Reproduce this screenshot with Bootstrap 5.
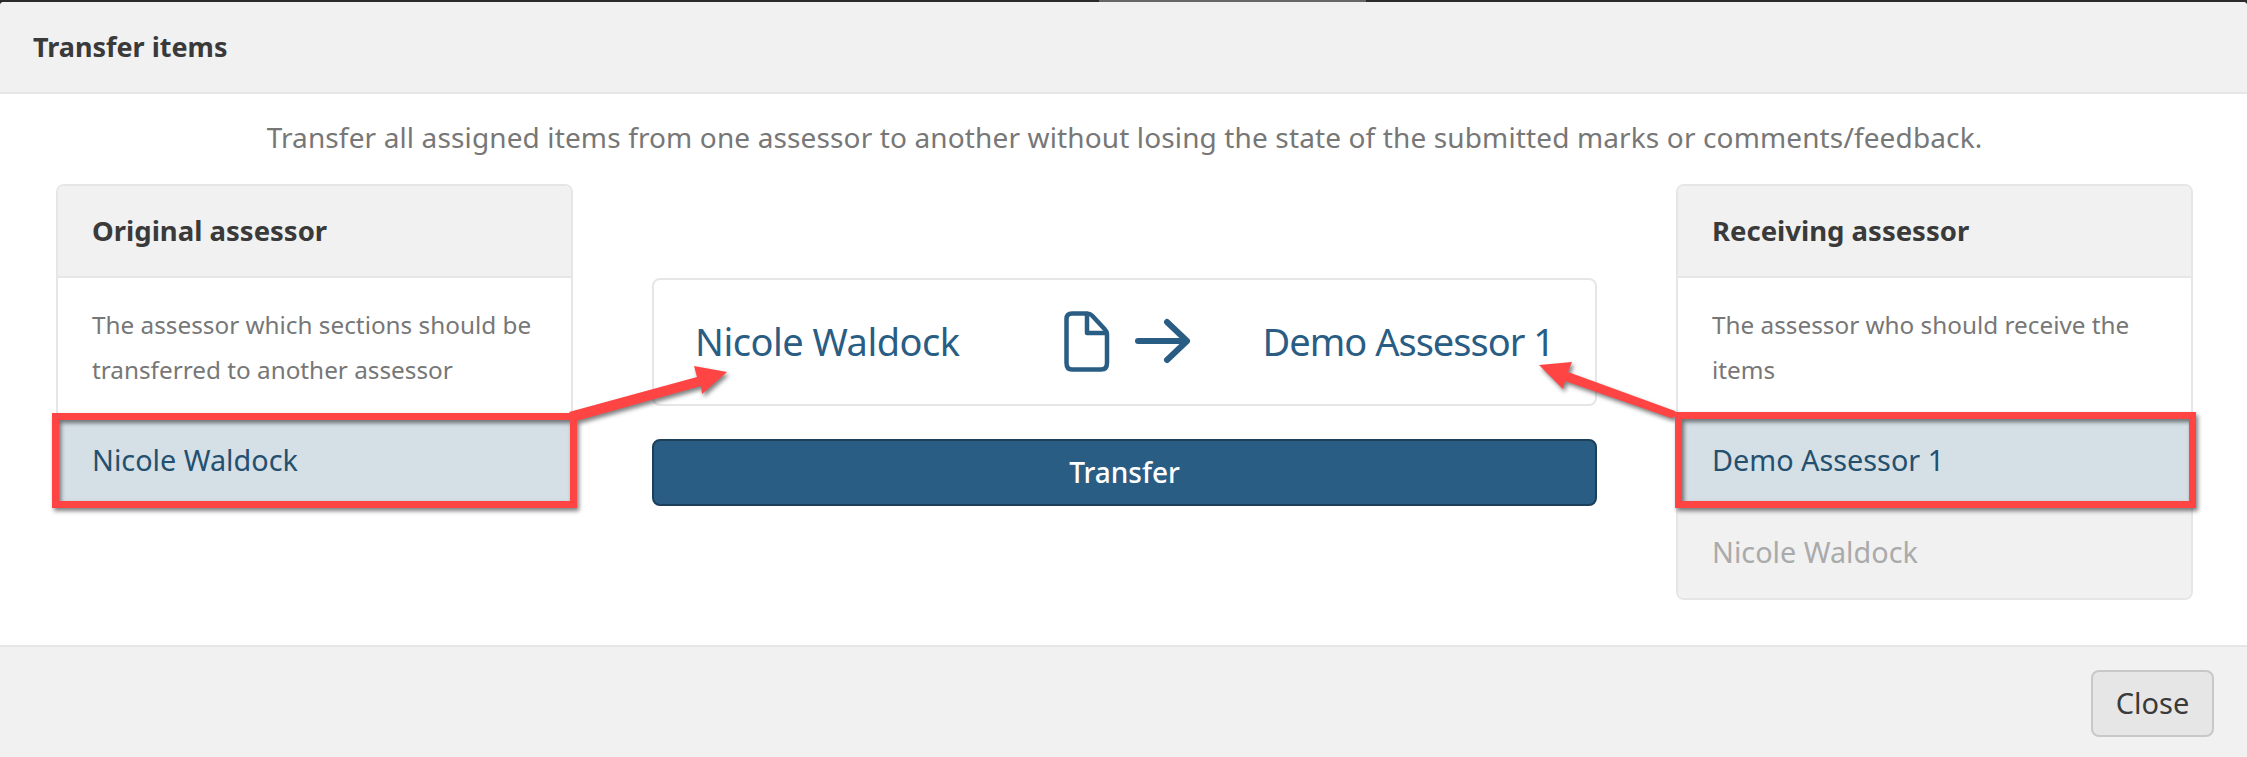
<!doctype html>
<html lang="en">
<head>
  <meta charset="utf-8">
  <title>Transfer items</title>
  <link href="https://cdn.jsdelivr.net/npm/bootstrap@5.3.0/dist/css/bootstrap.min.css" rel="stylesheet">
  <style>
    html, body { height: 757px; overflow: hidden; }
    body { background: linear-gradient(90deg, #2b2b2b 1099px, #666 1099px, #666 1366px, #2b2b2b 1366px); font-family: "Noto Sans", "Open Sans", sans-serif; color: #3a3a3a; }
    .dialog { position: relative; margin-top: 2px; height: 755px; background: #fff; border-radius: 4px 4px 0 0; overflow: hidden; display: flex; flex-direction: column; }
    .dialog-head { height: 92px; padding-left: 33px; background: #f1f1f1; border-bottom: 2px solid #e6e6e6; font-size: 27px; font-weight: 700; display: flex; align-items: center; }
    .dialog-main { flex: 1 1 auto; padding: 0 54px 0 56px; }
    .intro { margin: 0; padding-top: 23px; height: 90px; text-align: center; font-size: 28px; letter-spacing: .13px; color: #777; line-height: 40px; }
    .columns { display: flex; justify-content: space-between; align-items: flex-start; }
    .side { width: 517px; border: 2px solid #e6e6e6; border-radius: 8px; overflow: hidden; }
    .side-head { height: 92px; padding-left: 34px; background: #f1f1f1; border-bottom: 2px solid #e6e6e6; font-size: 27.500px; font-weight: 700; display: flex; align-items: center; }
    .side-text { margin: 0; padding: 24px 34px 0; height: 136px; font-size: 24.300px; line-height: 45px; color: #777; }
    .person { height: 92px; padding-left: 34px; font-size: 28.800px; display: flex; align-items: center; }
    .person-on { background: #d5dfe6; color: #24506f; }
    .person-off { background: #f1f1f1; color: #aaa; }
    .middle { width: 945px; padding-top: 94px; }
    .summary { height: 128px; padding: 0 41px 2px; border: 2px solid #e6e6e6; border-radius: 8px; color: #2a5d84; font-size: 38px; display: flex; align-items: center; }
    .from-name { letter-spacing: -.5px; }
    .to-name { letter-spacing: -1px; }
    .summary-icons { gap: 25px; margin-left: 103px; margin-right: auto; }
    .go-btn { width: 100%; height: 67px; margin-top: 33px; background: #2a5d84; border: 2px solid #1c3f5a; border-radius: 8px; color: #fff; font-size: 28px; font-weight: 500; padding: 0 0 2px; }
    .dialog-foot { height: 112px; padding: 23px 33px 0 0; background: #f1f1f1; border-top: 2px solid #e6e6e6; display: flex; justify-content: flex-end; align-items: flex-start; }
    .close-btn { width: 123px; height: 67px; padding: 0 0 2px; background: #e6e6e6; border: 2px solid #c8c8c8; border-radius: 8px; color: #3a3a3a; font-size: 29px; }
    .notes { position: absolute; left: 0; top: -2px; pointer-events: none; filter: drop-shadow(2px 3px 2px rgba(0,0,0,.5)); }
  </style>
</head>
<body>
  <div class="dialog">
    <div class="dialog-head">Transfer items</div>
    <div class="dialog-main">
      <p class="intro">Transfer all assigned items from one assessor to another without losing the state of the submitted marks or comments/feedback.</p>
      <div class="columns">
        <div class="side">
          <div class="side-head">Original assessor</div>
          <p class="side-text">The assessor which sections should be transferred to another assessor</p>
          <div class="person person-on">Nicole Waldock</div>
        </div>
        <div class="middle">
          <div class="summary">
            <span class="from-name">Nicole Waldock</span>
            <span class="summary-icons d-flex align-items-center">
              <svg width="47" height="63" viewBox="0 0 47 63" fill="none" stroke="#2a5d84" stroke-width="4.500" stroke-linejoin="round" stroke-linecap="round">
                <path d="M9 3.500H24Q27 3.500 29 5.500L42 19.500Q44 21.500 44 24V53Q44 59.500 38 59.500H9Q3.500 59.500 3.500 53V9Q3.500 3.500 9 3.500Z"/>
                <path d="M24 4V23H43"/>
              </svg>
              <svg width="56" height="46" viewBox="0 0 56 46" fill="none" stroke="#2a5d84" stroke-width="6" stroke-linejoin="round" stroke-linecap="round">
                <path d="M3 23H52M32 4L52 23L32 42"/>
              </svg>
            </span>
            <span class="to-name">Demo Assessor 1</span>
          </div>
          <button class="btn go-btn" type="button">Transfer</button>
        </div>
        <div class="side">
          <div class="side-head">Receiving assessor</div>
          <p class="side-text">The assessor who should receive the items</p>
          <div class="person person-on">Demo Assessor 1</div>
          <div class="person person-off">Nicole Waldock</div>
        </div>
      </div>
    </div>
    <div class="dialog-foot">
      <button class="btn close-btn" type="button">Close</button>
    </div>
    <!-- red markup drawn over the screenshot -->
    <svg class="notes" width="2247" height="757" viewBox="0 0 2247 757">
      <g fill="#ff4444">
        <polygon points="569,412 697,377 694,366 727,372 702,394 701,386 576,421"/>
        <polygon points="1539,365 1572,362 1568,372 1675,411 1677,416 1671,418 1565,381 1563,389"/>
      </g>
      <g fill="none" stroke="#ff4444" stroke-width="7">
        <rect x="55.500" y="416.500" width="518" height="88"/>
        <rect x="1678.500" y="415.500" width="514" height="89"/>
      </g>
    </svg>
  </div>
</body>
</html>
